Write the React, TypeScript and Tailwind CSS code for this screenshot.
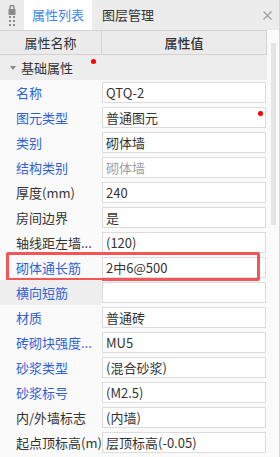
import React from 'react';

interface Row {
  label: string;
  value: string;
  blue?: boolean;
  muted?: boolean;
  dot?: boolean;
  hilite?: boolean;
  shaded?: boolean;
}

const rows: Row[] = [
  { label: '名称', value: 'QTQ-2', blue: true },
  { label: '图元类型', value: '普通图元', blue: true, dot: true },
  { label: '类别', value: '砌体墙', blue: true },
  { label: '结构类别', value: '砌体墙', blue: true, muted: true },
  { label: '厚度(mm)', value: '240' },
  { label: '房间边界', value: '是' },
  { label: '轴线距左墙...', value: '(120)' },
  { label: '砌体通长筋', value: '2中6@500', blue: true, hilite: true },
  { label: '横向短筋', value: '', blue: true, shaded: true },
  { label: '材质', value: '普通砖', blue: true },
  { label: '砖砌块强度...', value: 'MU5', blue: true },
  { label: '砂浆类型', value: '(混合砂浆)', blue: true },
  { label: '砂浆标号', value: '(M2.5)', blue: true },
  { label: '内/外墙标志', value: '(内墙)' },
  { label: '起点顶标高(m)', value: '层顶标高(-0.05)' },
];

function LockGrip() {
  return (
    <svg width="10" height="24" viewBox="0 0 10 24" className="text-[#8a8a8a]">
      <rect x="1.5" y="6" width="7" height="6" rx="0.5" fill="currentColor" />
      <path d="M3 6.5V4.5a2 2 0 0 1 4 0v2" stroke="currentColor" strokeWidth="1.4" fill="none" />
      {[14, 18, 22].map((y) => (
        <g key={y}>
          <rect x="2" y={y - 1} width="2" height="2" fill="currentColor" />
          <rect x="6" y={y - 1} width="2" height="2" fill="currentColor" />
        </g>
      ))}
    </svg>
  );
}

export default function App() {
  return (
    <div
      className="w-[280px] h-[457px] overflow-hidden bg-[#fafafa] border-r border-[#d6d6d6] flex flex-col text-[13px] text-[#333]"
      style={{ fontFamily: '"Noto Sans CJK SC", "Noto Sans", sans-serif' }}
    >
      {/* Tabs */}
      <div className="h-[30px] shrink-0 flex items-stretch bg-[#ececec]">
        <div className="w-[24px] flex items-start justify-center pt-[3px]">
          <LockGrip />
        </div>
        <div className="w-[68px] bg-white flex items-center justify-center text-[#3b86f0]">属性列表</div>
        <div className="px-[10px] flex items-center text-[#333]">图层管理</div>
        <div className="flex-1" />
        <div className="w-[24px] flex items-center justify-center text-[#9a9a9a]">
          <svg width="9" height="9" viewBox="0 0 9 9">
            <path d="M0.5 0.5l8 8M8.5 0.5l-8 8" stroke="currentColor" strokeWidth="1.1" />
          </svg>
        </div>
      </div>

      <div className="flex-1 flex min-h-0">
        <div className="w-[267px] shrink-0 flex flex-col">
          {/* Header */}
          <div className="h-[25px] shrink-0 flex bg-[#ebebeb] border-y border-[#d2d2d2]">
            <div className="w-[102px] flex items-center justify-center border-r border-[#d2d2d2]">属性名称</div>
            <div className="flex-1 flex items-center justify-center font-medium border-r border-[#d2d2d2]">属性值</div>
          </div>

          {/* Group */}
          <div className="relative h-[25px] shrink-0 flex items-center bg-[#ededed] pl-[10px] gap-[5px]">
            <svg width="6" height="4" viewBox="0 0 6 4"><path d="M0 0h6L3 4z" fill="#888" /></svg>
            <span>基础属性</span>
            <span className="absolute left-[91px] top-[4px] w-[5px] h-[5px] rounded-full bg-[#f00]" />
          </div>

          {rows.map((r) => (
            <div key={r.label} className="relative h-[25px] shrink-0 flex">
              <div
                className={`w-[102px] flex items-center pl-[16px] whitespace-nowrap ${r.shaded ? 'bg-[#eeeeee]' : ''} ${
                  r.blue ? 'text-[#2f5fd8]' : 'text-[#333]'
                }`}
              >
                {r.label}
              </div>
              <div className="flex-1 py-[2px] pr-[1px]">
                <div
                  className={`relative h-full bg-white border border-[#dcdcdc] flex items-center pl-[3px] whitespace-nowrap ${
                    r.muted ? 'text-[#a0a0a0]' : 'text-[#333]'
                  }`}
                >
                  {r.value}
                  {r.dot && <span className="absolute right-[2px] top-[3px] w-[5px] h-[5px] rounded-full bg-[#f00]" />}
                </div>
              </div>
              {r.hilite && (
                <div className="absolute left-[6px] top-[-3px] w-[254px] h-[29px] border-[3px] border-[#f25656] rounded-[2px] pointer-events-none" />
              )}
            </div>
          ))}
        </div>

        {/* Scrollbar */}
        <div className="flex-1 relative">
          <div className="absolute left-[4px] top-[13px] w-[5px] h-[182px] bg-[#e4e4e4]" />
        </div>
      </div>
    </div>
  );
}
